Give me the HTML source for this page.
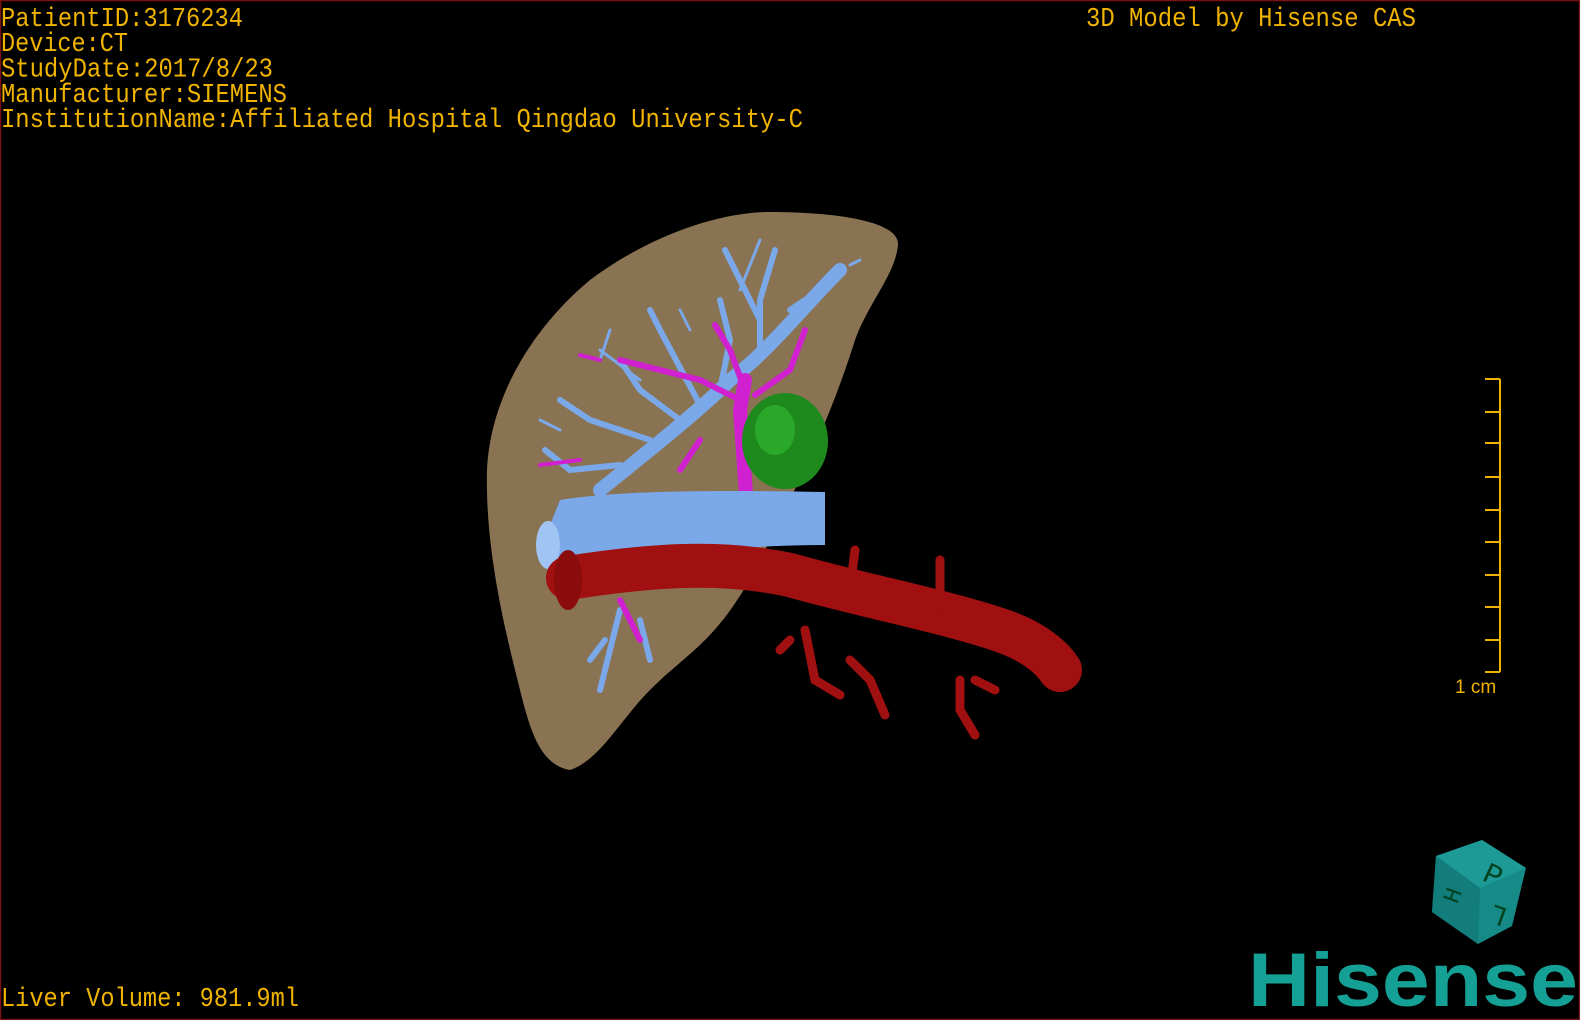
<!DOCTYPE html>
<html><head><meta charset="utf-8"><style>
html,body{margin:0;padding:0;background:#000;width:1580px;height:1020px;overflow:hidden}
svg{display:block}
.t{font-family:"Liberation Mono",monospace;fill:#f0b400;font-size:23px}
</style></head><body>
<svg width="1580" height="1020" viewBox="0 0 1580 1020">
<rect x="0.5" y="0.5" width="1579" height="1019" fill="#000" stroke="#7a1010" stroke-width="1.5"/>
<g class="t" transform="scale(1,1.15)">
<text x="1" y="22.5" textLength="242" lengthAdjust="spacingAndGlyphs">PatientID:3176234</text>
<text x="1" y="44.5" textLength="127" lengthAdjust="spacingAndGlyphs">Device:CT</text>
<text x="1" y="66.5" textLength="272" lengthAdjust="spacingAndGlyphs">StudyDate:2017/8/23</text>
<text x="1" y="88.5" textLength="286" lengthAdjust="spacingAndGlyphs">Manufacturer:SIEMENS</text>
<text x="1" y="110.5" textLength="802" lengthAdjust="spacingAndGlyphs">InstitutionName:Affiliated Hospital Qingdao University-C</text>
<text x="1086" y="22.5" textLength="330" lengthAdjust="spacingAndGlyphs">3D Model by Hisense CAS</text>
<text x="1" y="875" textLength="298" lengthAdjust="spacingAndGlyphs">Liver Volume: 981.9ml</text>
</g>
<g stroke="#f0b400" stroke-width="2" fill="none">
<path d="M1500 379V672"/>
<path d="M1485 379H1500M1485 412H1500M1485 443H1500M1485 477H1500M1485 510H1500M1485 542H1500M1485 575H1500M1485 607H1500M1485 640H1500M1485 672H1500"/>
</g>
<text x="1455" y="693" fill="#f0b400" font-family="Liberation Sans,sans-serif" font-size="19">1 cm</text>
<path d="M770 212 C830 212 900 220 898 245 C895 275 870 300 855 340 C830 420 800 480 760 560 C720 640 690 650 650 690 C620 720 600 760 570 770 C540 765 530 730 520 690 C505 630 485 550 487 470 C490 400 530 330 590 280 C650 235 720 212 770 212Z" fill="#8a7352"/>
<g stroke="#7aa8e8" fill="none" stroke-linecap="round">
<path d="M600 490 C650 450 700 410 730 380 C770 350 800 310 840 270" stroke-width="14"/>
<path d="M760 350 L760 300 L775 250 M760 320 L735 270 L725 250 M790 310 L820 290 M700 405 L660 330 L650 310 M680 420 L640 390 L620 360 M650 440 L590 420 L560 400 M620 465 L570 470 L545 450 M720 390 L730 340 L720 300" stroke-width="6"/>
<path d="M600 360 L610 330 M640 380 L600 350 M690 330 L680 310 M560 430 L540 420 M740 290 L760 240 M810 300 L830 280 M850 265 L860 260" stroke-width="3"/>
<path d="M620 610 L610 650 L600 690 M640 620 L650 660 M605 640 L590 660" stroke-width="6"/>
</g>
<g stroke="#d020d0" fill="none" stroke-linecap="round">
<path d="M750 550 L745 480 L740 410 L745 380" stroke-width="14"/>
<path d="M740 400 L700 380 L660 370 L620 360 M745 390 L730 350 L715 325 M755 395 L790 370 L805 330 M700 440 L680 470 M620 600 L640 640" stroke-width="6"/>
<path d="M600 360 L580 355 M580 460 L540 465" stroke-width="4"/>
</g>
<ellipse cx="785" cy="441" rx="43" ry="48" fill="#1e8a1e"/>
<ellipse cx="775" cy="430" rx="20" ry="25" fill="#2aa82a"/>
<path d="M560 500 C620 490 720 490 825 492 L825 545 C720 545 620 560 550 570 L540 550 Z" fill="#7aa8e8"/>
<ellipse cx="548" cy="545" rx="12" ry="24" fill="#a0c4f4"/>
<g fill="none" stroke-linecap="round">
<path d="M568 578 C650 565 720 560 790 575 C860 595 940 610 1000 630 C1030 640 1050 655 1060 670" stroke="#a01010" stroke-width="44"/>
<path d="M805 630 L815 680 L840 695 M850 660 L870 680 L885 715 M940 560 L940 610 M960 680 L960 710 L975 735 M975 680 L995 690 M855 550 L850 590 M790 640 L780 650" stroke="#a01010" stroke-width="9"/>
</g>
<ellipse cx="568" cy="580" rx="14" ry="30" fill="#8a0c0c"/>
<path d="M1436 856 L1482 840 L1526 868 L1512 926 L1478 944 L1432 912 Z" fill="#158a86"/>
<path d="M1436 856 L1482 840 L1526 868 L1480 888 Z" fill="#1e9a96"/>
<path d="M1436 856 L1480 888 L1478 944 L1432 912 Z" fill="#127d7a"/>
<text x="1484" y="884" font-family="Liberation Mono,monospace" font-size="30" fill="#042" transform="rotate(25 1492 875)">P</text>
<text x="1488" y="928" font-family="Liberation Mono,monospace" font-size="28" fill="#042" transform="rotate(200 1497 917)">L</text>
<text x="1440" y="900" font-family="Liberation Mono,monospace" font-size="24" fill="#042" transform="rotate(-70 1452 890)">H</text>
<text x="1248" y="1006" font-family="Liberation Sans,sans-serif" font-weight="bold" font-size="76" fill="#15a096" textLength="330" lengthAdjust="spacingAndGlyphs">Hisense</text>
</svg>
</body></html>
